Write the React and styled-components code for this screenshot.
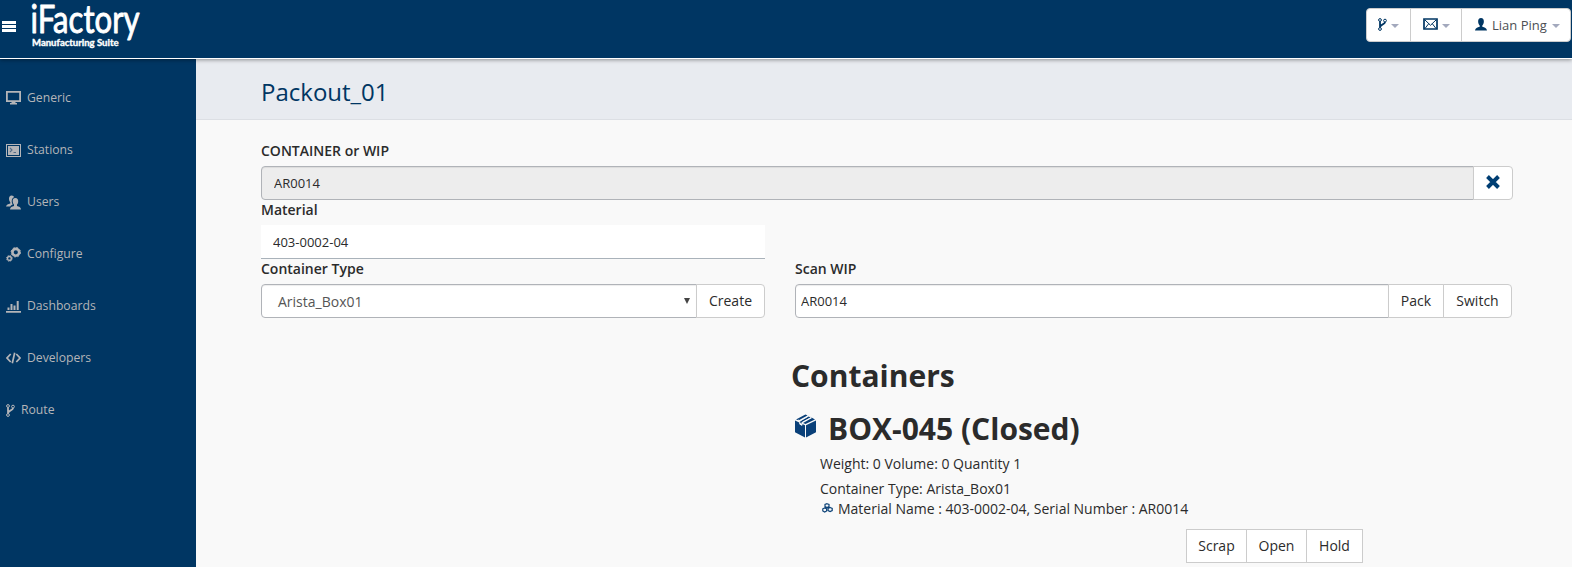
import React from "react";
import styled, { createGlobalStyle } from "styled-components";

const navy = "#003663";
const ink = "#2b2b2b";

const GlobalStyle = createGlobalStyle`
  *, *::before, *::after { box-sizing: border-box; }
  html, body { margin: 0; padding: 0; overflow: hidden; }
  body { background: #f9f9f9; color: ${ink}; font: 14px/20px "Open Sans", sans-serif; }
  button, input { font: inherit; color: inherit; margin: 0; }
  svg { display: block; flex: none; }
`;

const Page = styled.div`
  height: 567px;
  display: flex;
  flex-direction: column;
  overflow: hidden;
`;

const Header = styled.header`
  flex: none;
  height: 59px;
  display: flex;
  align-items: flex-start;
  background: ${navy};
  border-bottom: 1px solid #fff;
  box-shadow: 0 1px 4px rgba(0, 0, 0, 0.4);
  position: relative;
  z-index: 2;
`;

const MenuToggle = styled.div`
  width: 14px;
  height: 11px;
  margin: 21px 0 0 2px;
  display: flex;
  flex-direction: column;
  justify-content: space-between;
`;

const MenuLine = styled.span`
  height: 3px;
  background: #fff;
`;

const Logo = styled.svg`
  margin-left: 14px;
  overflow: visible;
`;

const HeaderActions = styled.div`
  margin: 8px 1px 0 auto;
  height: 34px;
  display: flex;
  background: #fff;
  border: 1px solid #ccc;
  border-radius: 4px;
`;

const HeaderButton = styled.button`
  width: ${(p) => p.$width}px;
  padding: 0 0 0 ${(p) => p.$inset}px;
  display: flex;
  align-items: center;
  gap: ${(p) => p.$gap || 5}px;
  border: 0;
  background: transparent;
  color: #4c4f54;
  font-size: 13px;
  white-space: nowrap;
  & + & { border-left: 1px solid #ccc; }
  svg { margin-bottom: 2px; }
`;

const Caret = styled.span`
  border: 4px solid transparent;
  border-top-color: #a3a9bd;
  border-bottom: 0;
  margin-top: 2px;
`;

const Body = styled.div`
  flex: 1;
  min-height: 0;
  display: flex;
`;

const Sidebar = styled.nav`
  flex: none;
  width: 196px;
  padding-top: 13px;
  background: ${navy};
`;

const NavItem = styled.a`
  height: 52px;
  padding-left: 6px;
  display: flex;
  align-items: center;
  gap: 6px;
  color: #b4b5b8;
`;

const NavText = styled.span`
  padding-bottom: 1px;
  font-size: 12.2px;
`;

const Main = styled.main`
  flex: 1;
  min-width: 0;
`;

const TitleBar = styled.div`
  height: 61px;
  padding: 16px 0 0 65px;
  background: #e8ebf0;
  border-bottom: 1px solid #dcdfe4;
`;

const Title = styled.h1`
  margin: 0;
  font-size: 24px;
  line-height: 33px;
  font-weight: 400;
  color: ${navy};
`;

const Content = styled.div`
  padding: 21px 59px 0 65px;
`;

const Columns = styled.div`
  display: grid;
  grid-template-columns: 504px 717px;
  column-gap: 30px;
`;

const Field = styled.div`
  grid-column: ${(p) => p.$column || "auto"};
`;

const Label = styled.label`
  display: block;
  height: 25px;
  font-weight: 600;
`;

const InputGroup = styled.div`
  display: flex;
  height: 34px;
`;

const TextInput = styled.input`
  flex: 1;
  min-width: 0;
  padding: 0 ${(p) => p.$inset}px;
  border: 1px solid #b0b3b8;
  border-radius: 4px 0 0 4px;
  background: ${(p) => (p.$disabled ? "#ededed" : "#fff")};
  box-shadow: inset 0 1px 1px rgba(0, 0, 0, 0.075);
  font-size: 13px;
  outline: 0;
`;

const PlainInput = styled.input`
  display: block;
  width: 100%;
  height: 34px;
  padding: 0 12px;
  border: 0;
  border-bottom: 1px solid #a9b2ba;
  background: #fff;
  font-size: 13px;
  outline: 0;
`;

const SelectBox = styled.div`
  flex: 1;
  display: flex;
  align-items: center;
  justify-content: space-between;
  padding: 2px 6px 0 16px;
  border: 1px solid #b0b3b8;
  border-radius: 4px 0 0 4px;
  background: #fff;
  box-shadow: inset 0 1px 1px rgba(0, 0, 0, 0.075);
  color: #555;
`;

const SelectArrow = styled.span`
  border: 3px solid transparent;
  border-top: 6px solid #444;
  border-bottom: 0;
  margin-top: -2px;
`;

const Button = styled.button`
  flex: none;
  width: ${(p) => p.$width}px;
  height: 34px;
  margin-left: -1px;
  padding: 0;
  display: flex;
  align-items: center;
  justify-content: center;
  border: 1px solid #ccc;
  border-radius: ${(p) => (p.$end ? "0 4px 4px 0" : "0")};
  background: #fff;
  svg { margin-bottom: 2px; }
`;

const Results = styled.section`
  padding: 40px 0 0 530px;
`;

const Heading = styled.h2`
  margin: 0 0 0 ${(p) => p.$indent || 0}px;
  height: ${(p) => p.$height}px;
  display: flex;
  gap: 12px;
  font-size: 30px;
  line-height: 36px;
  font-weight: 700;
`;

const BoxIcon = styled.svg`
  margin-top: 3px;
`;

const Line = styled.div`
  height: ${(p) => p.$height}px;
  margin-left: 29px;
  display: flex;
  align-items: flex-start;
  gap: 5px;
`;

const PartsIcon = styled.span`
  padding: 4px 0 0 2px;
`;

const Actions = styled.div`
  margin: 5px 0 0 396px;
  display: flex;
`;

const ForkGlyph = ({ color = "currentColor" }) => (
  <svg width="9" height="13" viewBox="0 0 9 13" fill="none" stroke={color}>
    <circle cx="2" cy="2" r="1.4" />
    <circle cx="7" cy="2.6" r="1.4" />
    <circle cx="2" cy="11" r="1.4" />
    <path d="M2 3.3V9.7M7 3.9C7 6.8 2.6 6 2.2 9" strokeWidth="1.8" />
  </svg>
);

const MonitorGlyph = () => (
  <svg width="15" height="14" viewBox="0 0 15 14">
    <path fill="currentColor" fillRule="evenodd" d="M0 0H15V11H0ZM1.8 1.8V9.2H13.2V1.8ZM5.5 11H9.5V12H11V13.4H4V12H5.5Z" />
  </svg>
);

const TerminalGlyph = () => (
  <svg width="15" height="13" viewBox="0 0 15 13">
    <path fill="currentColor" fillRule="evenodd" d="M0 0H15V13H0ZM1 1V12H14V1Z" />
    <path fill="currentColor" d="M2 2H13V11H2Z" />
    <path d="M4 4L6 6L4 8M7.5 8.5H10" fill="none" stroke="#526c88" strokeWidth="1.1" />
  </svg>
);

const UsersGlyph = () => (
  <svg width="15" height="15" viewBox="0 0 15 15" fill="currentColor">
    <path d="M5.6.4C3.8.4 3 1.8 3 3.6c0 1.7.5 2.9 1.3 3.7v1.2C2.2 9 .2 9.8 0 11.5h4.2c.6-1 1.7-1.5 2.6-1.9-1.2-1.6-1.6-4.8-.2-6.4C7 2.7 7.6 2.4 8.2 2.3 7.9 1.2 7 .4 5.6.4z" />
    <path d="M9.3 3C7.3 3 6.6 4.5 6.7 6.3c.1 1.6.6 2.6 1.3 3.3V11c-2 .4-3.8 1.3-4 3.500h11c-.2-2.2-2-3.1-4-3.500V9.600c.8-.8 1.2-1.8 1.2-3.300C12.2 4.300 11.400 3 9.300 3z" />
  </svg>
);

const GearsGlyph = () => (
  <svg width="15" height="15" viewBox="0 0 15 15" fill="none" stroke="currentColor">
    <circle cx="9.800" cy="5.300" r="3.400" strokeWidth="2.600" />
    <circle cx="9.800" cy="5.300" r="4.700" strokeWidth="1" strokeDasharray="1.850 1.840" />
    <circle cx="3.400" cy="11.400" r="1.900" strokeWidth="1.400" />
    <circle cx="3.400" cy="11.400" r="2.900" strokeWidth="1" strokeDasharray="1.140 1.140" />
  </svg>
);

const ChartGlyph = () => (
  <svg width="15" height="13" viewBox="0 0 15 13" fill="currentColor">
    <path d="M0 11H15V12.700H0ZM1.500 7.500H3.500V10H1.500ZM4.500 4H6.500V10H4.500ZM7.500 5.500H9.500V10H7.500ZM10.700 1H12.700V10H10.700Z" />
  </svg>
);

const CodeGlyph = () => (
  <svg width="15" height="12" viewBox="0 0 15 12" fill="none" stroke="currentColor" strokeWidth="1.700">
    <path d="M4.700 2L1 6L4.700 10M10.300 2L14 6L10.300 10M8.700.7L6.300 11.300" />
  </svg>
);

const MailGlyph = () => (
  <svg width="15" height="12" viewBox="0 0 15 12" fill="none" stroke={navy}>
    <path d="M1 1H14V11H1Z" strokeWidth="1.700" />
    <path d="M2 2L7.500 7.300L13 2M2 10.500L5.700 5.700M13 10.500L9.300 5.700" />
  </svg>
);

const UserGlyph = () => (
  <svg width="12" height="13" viewBox="0 0 13 13" preserveAspectRatio="none" fill={navy}>
    <path d="M6.500 0C4.300 0 3.400 1.500 3.400 3.500c0 1.800.7 3.100 1.700 4v1.200C2.500 9.200.3 10 0 12.600h13C12.700 10 10.500 9.200 7.900 8.700V7.500c1-.9 1.700-2.200 1.700-4C9.600 1.500 8.700 0 6.500 0z" />
  </svg>
);

const CloseGlyph = () => (
  <svg width="14" height="14" viewBox="0 0 14 14" fill="none" stroke="#003e73" strokeWidth="3.900">
    <path d="M1.500 1.500L12.500 12.500M12.500 1.500L1.500 12.500" />
  </svg>
);

const PartsGlyph = () => (
  <svg width="11" height="10" viewBox="0 0 11 10" fill="none" stroke="#0d4378" strokeWidth="1.200">
    <path d="M5 .7L7 1.500V3.600L5 4.500L3 3.600V1.500ZM2.700 4.900L4.600 5.800V8L2.700 9L.8 8V5.800ZM8.100 4.500L10.200 5.400V7.600L8.100 8.500L6.100 7.600V5.400Z" />
  </svg>
);

const navItems = [
  ["Generic", MonitorGlyph],
  ["Stations", TerminalGlyph],
  ["Users", UsersGlyph],
  ["Configure", GearsGlyph],
  ["Dashboards", ChartGlyph],
  ["Developers", CodeGlyph],
  ["Route", ForkGlyph],
];

export default function App() {
  return (
    <Page>
      <GlobalStyle />
      <Header>
        <MenuToggle><MenuLine /><MenuLine /><MenuLine /></MenuToggle>
        <Logo width="114" height="52" viewBox="30 0 114 52" fill="#fff" stroke="#fff" strokeLinejoin="round">
          <text x="30.500" y="33" fontFamily="Lato, sans-serif" fontSize="38" strokeWidth="0.900" textLength="109" lengthAdjust="spacingAndGlyphs">iFactory</text>
          <text x="32" y="45.500" fontFamily="Lato, sans-serif" fontWeight="700" fontSize="10" strokeWidth="0.400" textLength="86.500" lengthAdjust="spacingAndGlyphs">Manufacturing Suite</text>
        </Logo>
        <HeaderActions>
          <HeaderButton $width={43} $inset={11} $gap={4}><ForkGlyph color={navy} /><Caret /></HeaderButton>
          <HeaderButton $width={51} $inset={12} $gap={4}><MailGlyph /><Caret /></HeaderButton>
          <HeaderButton $width={109} $inset={13}><UserGlyph />Lian Ping<Caret /></HeaderButton>
        </HeaderActions>
      </Header>
      <Body>
        <Sidebar>
          {navItems.map(([name, Glyph]) => (
            <NavItem key={name}><Glyph /><NavText>{name}</NavText></NavItem>
          ))}
        </Sidebar>
        <Main>
          <TitleBar><Title>Packout_01</Title></TitleBar>
          <Content>
            <Field>
              <Label>CONTAINER or WIP</Label>
              <InputGroup>
                <TextInput $inset={12} $disabled readOnly value="AR0014" />
                <Button $width={40} $end><CloseGlyph /></Button>
              </InputGroup>
            </Field>
            <Columns>
              <Field $column="1">
                <Label>Material</Label>
                <PlainInput readOnly value="403-0002-04" />
              </Field>
              <Field $column="1">
                <Label>Container Type</Label>
                <InputGroup>
                  <SelectBox>Arista_Box01<SelectArrow /></SelectBox>
                  <Button $width={69} $end>Create</Button>
                </InputGroup>
              </Field>
              <Field $column="2">
                <Label>Scan WIP</Label>
                <InputGroup>
                  <TextInput $inset={5} readOnly value="AR0014" />
                  <Button $width={56}>Pack</Button>
                  <Button $width={69} $end>Switch</Button>
                </InputGroup>
              </Field>
            </Columns>
            <Results>
              <Heading $height={53}>Containers</Heading>
              <Heading $indent={4} $height={43}>
                <BoxIcon width="21" height="24" viewBox="0 0 21 24" fill="#0a4079">
                  <path d="M0 6.500L10 11.300V23.500L0 18.300ZM21 6.500L11 11.300V23.500L21 18.300ZM1 5.400L9 1.300L10.500.5L12.500 1.400L3.800 6.200ZM14 2.100L20 5.400L10.500 10.100L8 8.900L17 4ZM4.800 7.300L13.300 2.500L15.800 3.500L7 8.300V11.300L4.800 10.200Z" fillRule="evenodd" />
                  <path d="M3 5.900L5 7L13.300 2.200M7.300 8.300L16 3.600M4.800 7.300V10.200L7 11.300V8.300" fill="none" stroke="#f9f9f9" strokeWidth="1" />
                </BoxIcon>
                BOX-045 (Closed)
              </Heading>
              <Line $height={25}>Weight: 0 Volume: 0 Quantity 1</Line>
              <Line $height={20}>Container Type: Arista_Box01</Line>
              <Line $height={25}>
                <PartsIcon><PartsGlyph /></PartsIcon>
                Material Name : 403-0002-04, Serial Number : AR0014
              </Line>
              <Actions>
                <Button $width={61}>Scrap</Button>
                <Button $width={61}>Open</Button>
                <Button $width={57}>Hold</Button>
              </Actions>
            </Results>
          </Content>
        </Main>
      </Body>
    </Page>
  );
}
